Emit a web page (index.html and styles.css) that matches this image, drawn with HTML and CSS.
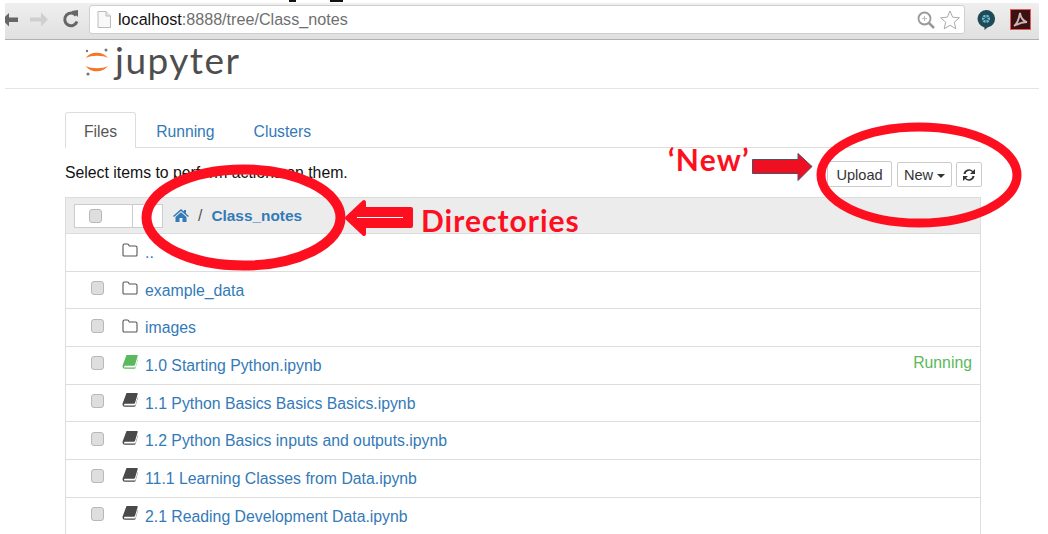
FILE: index.html
```html
<!DOCTYPE html>
<html>
<head>
<meta charset="utf-8">
<title>Class_notes</title>
<link rel="stylesheet" href="styles.css">
</head>
<body>

<div class="top-strip"><i class="cut-a"></i><i class="cut-b"></i></div>

<div class="chrome">
  <svg class="nav-icons" width="84" height="29" viewBox="0 3.500 84 29">
    <path d="M-3 18l7-6.500v4.500h9v4.500H4v4.500z" fill="#666"/>
    <path d="M25 16h11v-5l7 7-7 7v-5H25z" fill="#cfcfcf"/>
    <path d="M71 14a6.300 6.300 0 1 0 1 6" fill="none" stroke="#666" stroke-width="3"/>
    <path d="M66.500 9.500l6.500-1 0 7z" fill="#666"/>
  </svg>
  <div class="urlbar">
    <svg class="page-icon" width="14" height="17" viewBox="0 0 14 17"><path d="M1 .5h8l4.500 4.500v11.500H1z" fill="#f8f8f8" stroke="#bbb"/><path d="M9 .5v4.500h4.500" fill="#e6e6e6" stroke="#bbb"/></svg>
    <span class="url"><b>localhost</b>:8888/tree/Class_notes</span>
    <svg class="zoom-icon" width="18" height="18" viewBox="0 0 18 18"><circle cx="7.500" cy="7.500" r="6" fill="none" stroke="#999" stroke-width="1.800"/><path d="M12 12l5 5" stroke="#999" stroke-width="2.500"/><path d="M5 7.500h5M7.500 5v5" stroke="#bbb"/></svg>
    <svg class="star-icon" width="20" height="20" viewBox="0 0 20 20"><path d="M10 1l2.700 6.200 6.700.6-5.100 4.400 1.500 6.600L10 15.300l-5.800 3.500 1.500-6.600L.6 7.800l6.700-.6z" fill="#fff" stroke="#aaa"/></svg>
  </div>
  <svg class="bubble-icon" width="18" height="20" viewBox="0 0 18 20"><path d="M9 0a8.800 8.800 0 0 1 1.500 17.500L7.500 20v-2.600A8.800 8.800 0 0 1 9 0z" fill="#1f4a56"/><circle cx="9" cy="8.800" r="4" fill="#6cc3d8"/><path d="M9 4v9.500M5 6.500l8 4.500M13 6.500l-8 4.500" stroke="#1f4a56"/></svg>
  <svg class="acrobat-icon" width="21" height="21" viewBox="0 0 21 21"><rect x=".5" y=".5" width="20" height="20" fill="#3a1214" stroke="#e8584f"/><path d="M4 17c3-2 5-7 6-13 1 6 3 8 7 9-4 0-8 1-13 4z" fill="none" stroke="#cdb7b3" stroke-width="1.800"/></svg>
</div>

<header class="site-header">
  <svg class="logo-mark" width="26" height="30" viewBox="0 0 26 30">
    <path d="M2 11C6 4 19 4 24 11 19 8 7 8 2 11z" fill="#f37726"/>
    <path d="M2 19C6 26 19 26 24 19 19 22 7 22 2 19z" fill="#f37726"/>
    <circle cx="22" cy="3" r="1.500" fill="#767677"/>
    <circle cx="3" cy="4" r="1.200" fill="#767677"/>
    <circle cx="4" cy="27" r="1.600" fill="#767677"/>
  </svg>
  <span class="logo-text">jupyter</span>
</header>

<main class="content">
  <ul class="tabs">
    <li class="tab active">Files</li>
    <li class="tab">Running</li>
    <li class="tab">Clusters</li>
  </ul>

  <div class="toolbar">
    <span class="hint">Select items to perform actions on them.</span>
    <div class="buttons">
      <button class="btn upload">Upload</button>
      <button class="btn new">New <i class="caret"></i></button>
      <button class="btn refresh">
        <svg width="14" height="14" viewBox="0 0 14 14"><path d="M1.500 6a5.500 5.500 0 0 1 9.500-3L13 1v5H8l2-2a3.800 3.800 0 0 0-6.500 2zM12.500 8A5.500 5.500 0 0 1 3 11l-2 2V8h5l-2 2a3.800 3.800 0 0 0 6.500-2z" fill="#333"/></svg>
      </button>
    </div>
  </div>

  <div class="list">
    <div class="list-head">
      <div class="select-box"><span class="box-left"><i class="check"></i></span><span class="box-right"></span></div>
      <svg class="home" width="16" height="13" viewBox="0 0 16 13"><path d="M8 0l3 2.600V1h2v3.400L16 7l-1 1-7-6-7 6-1-1zM2.500 8L8 3.300 13.500 8v5H9.500V9h-3v4h-4z" fill="#337ab7"/></svg>
      <span class="slash">/</span>
      <span class="crumb">Class_notes</span>
    </div>

    <div class="row">
      <span class="check-slot"></span>
      <svg class="icon" width="16" height="14" viewBox="0 0 16 14"><use href="#folder"/></svg>
      <a class="name">..</a>
    </div>
    <div class="row">
      <span class="check-slot"><i class="check"></i></span>
      <svg class="icon" width="16" height="14" viewBox="0 0 16 14"><use href="#folder"/></svg>
      <a class="name">example_data</a>
    </div>
    <div class="row">
      <span class="check-slot"><i class="check"></i></span>
      <svg class="icon" width="16" height="14" viewBox="0 0 16 14"><use href="#folder"/></svg>
      <a class="name">images</a>
    </div>
    <div class="row">
      <span class="check-slot"><i class="check"></i></span>
      <svg class="icon book-green" width="16" height="14" viewBox="0 0 16 14"><use href="#book"/></svg>
      <a class="name">1.0 Starting Python.ipynb</a>
      <span class="running">Running</span>
    </div>
    <div class="row">
      <span class="check-slot"><i class="check"></i></span>
      <svg class="icon book-dark" width="16" height="14" viewBox="0 0 16 14"><use href="#book"/></svg>
      <a class="name">1.1 Python Basics Basics Basics.ipynb</a>
    </div>
    <div class="row">
      <span class="check-slot"><i class="check"></i></span>
      <svg class="icon book-dark" width="16" height="14" viewBox="0 0 16 14"><use href="#book"/></svg>
      <a class="name">1.2 Python Basics inputs and outputs.ipynb</a>
    </div>
    <div class="row">
      <span class="check-slot"><i class="check"></i></span>
      <svg class="icon book-dark" width="16" height="14" viewBox="0 0 16 14"><use href="#book"/></svg>
      <a class="name">11.1 Learning Classes from Data.ipynb</a>
    </div>
    <div class="row">
      <span class="check-slot"><i class="check"></i></span>
      <svg class="icon book-dark" width="16" height="14" viewBox="0 0 16 14"><use href="#book"/></svg>
      <a class="name">2.1 Reading Development Data.ipynb</a>
    </div>
  </div>
</main>

<svg class="defs" width="0" height="0">
  <symbol id="folder" viewBox="0 0 16 14"><path d="M1 12V2.500Q1 1 2.500 1h3q1 0 1.500 1.500l.3.500h6.200Q15 3 15 4.500V12q0 1-1 1H2q-1 0-1-1z" fill="none" stroke="#555" stroke-width="1.100"/></symbol>
  <symbol id="book" viewBox="0 0 16 14"><path d="M4.500 0H15q1 0 .7 1L13 10q-.2.800-1 .800H3q-1 0-1 .9 0 .9 1 .9h9.500q.8 0 1-.7L15.800 4l.2.500-2.300 8q-.3 1.300-1.500 1.300H3Q.5 13.800.500 11.500q0-.6.200-1.200z" fill="currentColor"/></symbol>
</svg>

<svg class="marks" width="1048" height="534" viewBox="0 0 1048 534">
  <ellipse cx="243.500" cy="217.500" rx="97" ry="48" fill="none" stroke="#fe0f1f" stroke-width="10"/>
  <ellipse cx="919" cy="175" rx="98" ry="48" fill="none" stroke="#fe0f1f" stroke-width="9"/>
  <path d="M347 218l17-16v7h47v17h-47v8z" fill="#fe0f1f" stroke="#fe0f1f" stroke-width="4" stroke-linejoin="round"/>
  <path d="M357 217.500h46" stroke="#fff" stroke-width="1"/>
  <path d="M752.500 159.500H798v-6l14 13-14 14v-7H752.500z" fill="#ee1020" stroke="#44546a"/>
</svg>
<span class="note note-new">‘New’</span>
<span class="note note-dirs">Directories</span>

</body>
</html>
```
FILE: styles.css
```css
html, body {
  margin: 0;
  height: 534px;
  overflow: hidden;
  background: #fff;
}

body {
  position: relative;
  font-family: "Liberation Sans", Arial, sans-serif;
  font-size: 15.800px;
  color: #333;
}

/* bits of the cut off heading above the browser bar */
.top-strip {
  display: flex;
  height: 3px;
}

.top-strip i {
  display: block;
  height: 2px;
  background: #111;
}

.cut-a { width: 7px; margin-left: 289px; }
.cut-b { width: 13px; margin-left: 34px; }

/* browser bar */
.chrome {
  display: flex;
  align-items: center;
  height: 37px;
  margin: 0 9px 0 5px;
  padding-bottom: 3px;
  box-sizing: border-box;
  background: linear-gradient(#efefef, #e0e0e0);
  border-bottom: 1px solid #b0b0b0;
}

.nav-icons { flex: none; }

.urlbar {
  display: flex;
  align-items: center;
  flex: none;
  width: 876px;
  height: 29px;
  box-sizing: border-box;
  background: #fff;
  border: 1px solid #cfcfcf;
  border-radius: 3px;
}

.page-icon { margin-left: 7px; }

.url {
  margin-left: 7px;
  color: #6f6f6f;
  font-size: 16.150px;
}

.url b { font-weight: normal; color: #111; }

.zoom-icon { margin-left: auto; }
.star-icon { margin: 0 4px 0 5px; }
.bubble-icon { margin-left: 12px; }
.acrobat-icon { margin-left: 15px; }

/* site header */
.site-header {
  display: flex;
  align-items: center;
  height: 48px;
  margin: 0 9px 0 5px;
  padding-left: 79px;
  border-bottom: 1px solid #e4e4e4;
}

.logo-text {
  margin-left: 5px;
  font-family: Lato, sans-serif;
  font-size: 37px;
  letter-spacing: 1.500px;
  color: #4e4e4e;
  line-height: 36px;
  position: relative;
  top: -4px;
}

.logo-mark { margin-top: -4px; }

/* main */
.content {
  width: 916px;
  margin-left: 65px;
  padding-top: 23px;
}

.tabs {
  display: flex;
  height: 35px;
  margin: 0;
  padding: 0;
  list-style: none;
  border-bottom: 1px solid #ddd;
}

.tab {
  padding: 0 19px 0 20px;
  font-size: 15.700px;
  line-height: 39px;
  color: #337ab7;
}

.tab.active {
  color: #555;
  background: #fff;
  border: 1px solid #ddd;
  border-bottom: 0;
  border-radius: 3px 3px 0 0;
  height: 36px;
  padding: 0 18px;
  box-sizing: border-box;
  line-height: 38px;
}

.toolbar {
  display: flex;
  justify-content: space-between;
  height: 49px;
}

.hint {
  margin-top: 16px;
  color: #111;
}

.buttons {
  display: flex;
  gap: 4px;
  margin: 13px -1px 0 0;
  align-items: flex-start;
}

.btn {
  height: 25px;
  margin-top: 1px;
  padding: 0;
  background: #fff;
  border: 1px solid #ccc;
  border-radius: 2px;
  font-family: inherit;
  font-size: 14.600px;
  color: #333;
}

.upload { width: 65px; height: 26px; margin-top: 0; padding-top: 1px; }
.new { width: 55px; margin-left: 1px; }
.refresh { width: 26px; display: flex; align-items: center; justify-content: center; }

.caret {
  display: inline-block;
  border-top: 4px solid #333;
  border-left: 4px solid transparent;
  border-right: 4px solid transparent;
  vertical-align: middle;
}

/* list */
.list {
  border: 1px solid #ddd;
  border-top: 0;
  border-bottom: 0;
}

.list-head {
  display: flex;
  align-items: center;
  height: 37px;
  background: #ececec;
  border-top: 1px solid #ddd;
  border-bottom: 1px solid #ddd;
  box-sizing: border-box;
  padding-left: 8px;
}

.select-box {
  display: flex;
  height: 24px;
  background: #fff;
  border: 1px solid #ccc;
  box-sizing: border-box;
}

.box-left {
  display: flex;
  align-items: center;
  width: 58px;
  padding-left: 14px;
  box-sizing: border-box;
  border-right: 1px solid #ccc;
}

.box-right { width: 29px; }

.check {
  display: block;
  width: 13px;
  height: 14px;
  box-sizing: border-box;
  background: #dedede;
  border: 1px solid #b8b8b8;
  border-radius: 3px;
}

.home { margin-left: 10px; }
.slash { margin: 0 9px; color: #555; }

.crumb {
  color: #337ab7;
  font-size: 15.400px;
  font-weight: bold;
}

.row {
  display: flex;
  align-items: center;
  height: 37.700px;
  box-sizing: border-box;
  border-bottom: 1px solid #ddd;
}

.check-slot {
  width: 25px;
  margin-left: 25px;
  position: relative;
  top: -2px;
}

.icon {
  margin-left: 6px;
  color: #555;
  position: relative;
  top: -2px;
}

.book-green { color: #5cb85c; top: -3px; }
.book-dark { color: #4a4a4a; top: -3px; }

.name {
  margin: 1px 0 0 7px;
  color: #337ab7;
}

.running {
  margin-left: auto;
  margin-right: 8px;
  color: #5cb85c;
  position: relative;
  top: -2px;
}

/* red annotations drawn over the page */
.marks {
  position: absolute;
  left: 0;
  top: 0;
}

.defs { position: absolute; }

.note {
  position: absolute;
  font-family: Lato, sans-serif;
  font-weight: bold;
  font-size: 30px;
  line-height: 34px;
  color: #fe0f1f;
}

.note-new { left: 668px; top: 142px; letter-spacing: 1.200px; }
.note-dirs { left: 421px; top: 203px; letter-spacing: 1px; }
```
